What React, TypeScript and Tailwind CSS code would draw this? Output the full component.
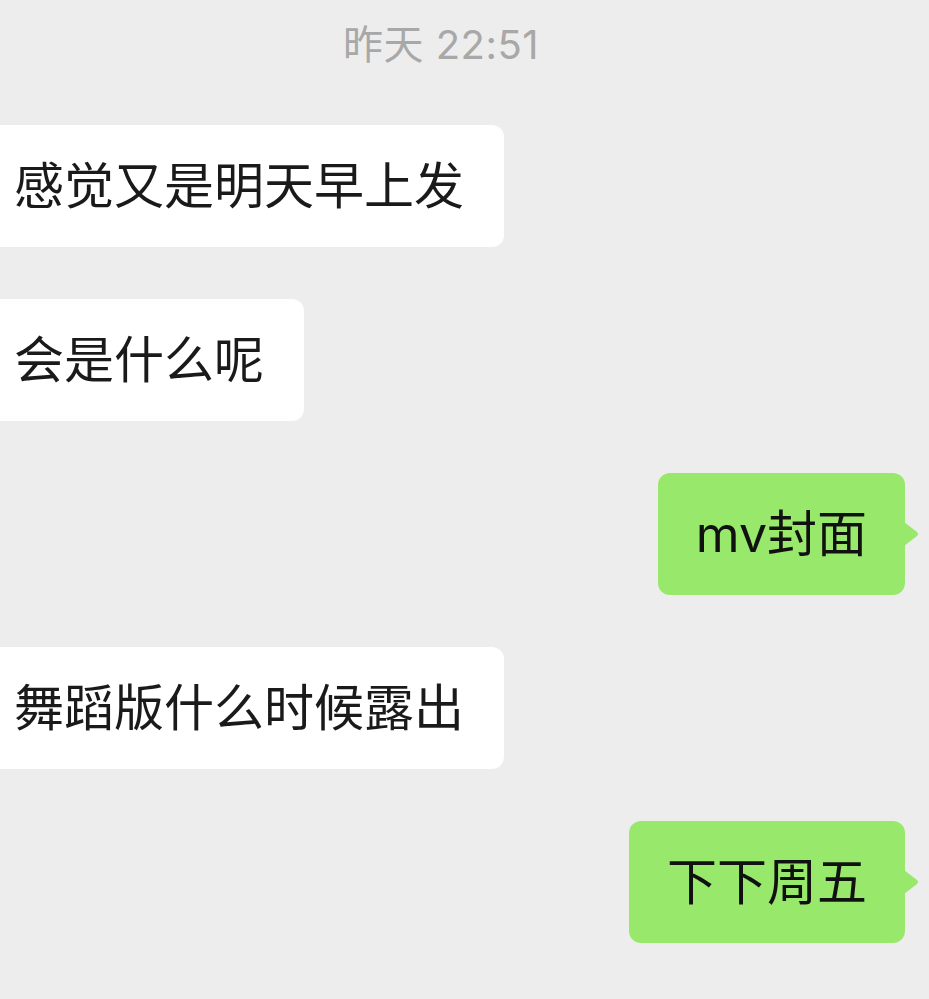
import React from "react";

const font = { fontFamily: 'Inter, "Noto Sans CJK SC", "Noto Sans", sans-serif' };

function Left({ text }: { text: string }) {
  return (
    <div className="self-start bg-white rounded-r-[12px] pl-[14px] pr-[40px] py-[26px] text-[50px] leading-[70px] text-[#1a1a1a]">
      {text}
    </div>
  );
}

function Right({ text }: { text: string }) {
  return (
    <div className="self-end mr-[24px] relative bg-[#98e96b] rounded-[12px] px-[38px] py-[26px] text-[50px] leading-[70px] text-[#111]">
      {text}
      <svg
        className="absolute right-[-15px] top-1/2 -translate-y-1/2"
        width="16"
        height="24"
        viewBox="0 0 16 24"
      >
        <path d="M0 0 L13 10 Q15 12 13 14 L0 24 Z" fill="#98e96b" />
      </svg>
    </div>
  );
}

export default function App() {
  return (
    <div
      className="w-[929px] h-[999px] bg-[#ededed] overflow-hidden flex flex-col"
      style={font}
    >
      <div className="mt-[18px] pr-[47px] text-center text-[40px] leading-[54px] tracking-[0.5px] text-[#a8a8a8]">
        昨天 22:51
      </div>
      <div className="mt-[53px] flex flex-col gap-[52px]">
        <Left text="感觉又是明天早上发" />
        <Left text="会是什么呢" />
        <Right text="mv封面" />
        <Left text="舞蹈版什么时候露出" />
        <Right text="下下周五" />
      </div>
    </div>
  );
}
